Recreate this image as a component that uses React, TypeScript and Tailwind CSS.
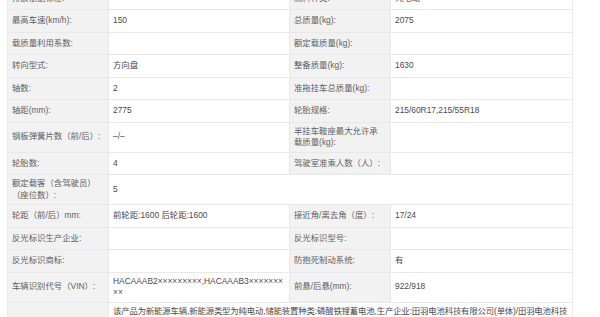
import React from "react";

type Row =
  | { kind: "four"; l1: React.ReactNode; v1: React.ReactNode; l2: React.ReactNode; v2: React.ReactNode; h?: string }
  | { kind: "span"; l1: React.ReactNode; v: React.ReactNode; h?: string };

const rows: Row[] = [
  { kind: "four", l1: "排放依据标准:", v1: "", l2: "燃料种类:", v2: "纯电动" },
  { kind: "four", l1: "最高车速(km/h):", v1: "150", l2: "总质量(kg):", v2: "2075" },
  { kind: "four", l1: "载质量利用系数:", v1: "", l2: "额定载质量(kg):", v2: "" },
  { kind: "four", l1: "转向型式:", v1: "方向盘", l2: "整备质量(kg):", v2: "1630" },
  { kind: "four", l1: "轴数:", v1: "2", l2: "准拖挂车总质量(kg):", v2: "" },
  { kind: "four", l1: "轴距(mm):", v1: "2775", l2: "轮胎规格:", v2: "215/60R17,215/55R18" },
  {
    kind: "four",
    l1: "钢板弹簧片数（前/后）:",
    v1: "–/–",
    l2: "半挂车鞍座最大允许承载质量(kg):",
    v2: "",
  },
  { kind: "four", l1: "轮胎数:", v1: "4", l2: "驾驶室准乘人数（人）:", v2: "" },
  { kind: "span", l1: "额定载客（含驾驶员）（座位数）:", v: "5" },
  { kind: "four", l1: "轮距（前/后）mm:", v1: "前轮距:1600 后轮距:1600", l2: "接近角/离去角（度）:", v2: "17/24" },
  { kind: "four", l1: "反光标识生产企业:", v1: "", l2: "反光标识型号:", v2: "" },
  { kind: "four", l1: "反光标识商标:", v1: "", l2: "防抱死制动系统:", v2: "有" },
  {
    kind: "four",
    l1: "车辆识别代号（VIN）:",
    v1: (
      <>
        HACAAAB2×××××××××,HACAAAB3×××××××
        <br />
        ××
      </>
    ),
    l2: "前悬/后悬(mm):",
    v2: "922/918",
  },
  {
    kind: "span",
    l1: "",
    v: "该产品为新能源车辆,新能源类型为纯电动,储能装置种类:磷酸铁锂蓄电池,生产企业:田羽电池科技有限公司(单体)/田羽电池科技有限公司(电池包),驱动电机型号:TZ180XS",
  },
];

const labelCls =
  "bg-[#f2f2f2] text-[#5f5f5f] px-[4px] py-[3px] border border-[#e9e9e9] align-middle h-[22.5px] font-normal text-left";
const valueCls =
  "bg-white text-[#4a4a4a] px-[4px] py-[3px] border border-[#e9e9e9] align-middle h-[22.5px] font-normal text-left";

export default function App() {
  return (
    <div
      className="w-[600px] h-[317px] overflow-hidden bg-white"
      style={{ fontFamily: '"Liberation Sans", "Noto Sans CJK SC", sans-serif' }}
    >
      <table className="table-fixed border-collapse ml-[7px] mt-[-13.5px] w-[565px] text-[8.4px] leading-[11.5px]">
        <colgroup>
          <col className="w-[101px]" />
          <col className="w-[181px]" />
          <col className="w-[101px]" />
          <col className="w-[182px]" />
        </colgroup>
        <tbody>
          {rows.map((r, i) =>
            r.kind === "four" ? (
              <tr key={i}>
                <td className={labelCls}>{r.l1}</td>
                <td className={valueCls}>{r.v1}</td>
                <td className={labelCls}>{r.l2}</td>
                <td className={valueCls}>{r.v2}</td>
              </tr>
            ) : (
              <tr key={i}>
                <td className={labelCls}>{r.l1}</td>
                <td className={`${valueCls} tracking-[-0.15px]`} colSpan={3}>
                  {r.v}
                </td>
              </tr>
            )
          )}
        </tbody>
      </table>
    </div>
  );
}
